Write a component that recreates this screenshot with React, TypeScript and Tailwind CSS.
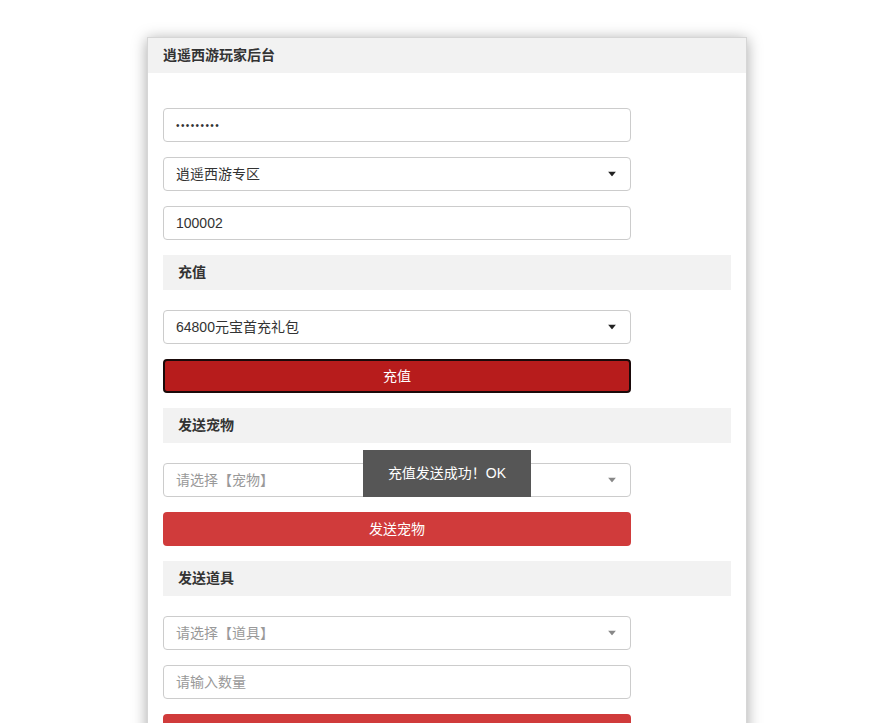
import React from "react";

const font = { fontFamily: '"Liberation Sans", "Noto Sans CJK SC", sans-serif' };

function Arrow({ gray }: { gray?: boolean }) {
  return (
    <svg width="8" height="5" viewBox="0 0 8 5" className="absolute right-[14px] top-1/2 -translate-y-1/2">
      <path d="M0 0 L8 0 L4 5 Z" fill={gray ? "#888" : "#222"} />
    </svg>
  );
}

function Field({ text, placeholder, select, grayArrow, dots }: { text: string; placeholder?: boolean; select?: boolean; grayArrow?: boolean; dots?: boolean }) {
  return (
    <div className="relative w-[468px] h-[34px] border border-[#cccccc] rounded-[4px] bg-white flex items-center pl-[12px]">
      <span className={`${dots ? "text-[10px] tracking-[1.4px]" : "text-[14px]"} ${placeholder ? "text-[#999]" : "text-[#333]"}`}>{text}</span>
      {select && <Arrow gray={grayArrow} />}
    </div>
  );
}

function Section({ title }: { title: string }) {
  return (
    <div className="w-full h-[35px] bg-[#f2f2f2] flex items-center pl-[15px] mb-[20px]">
      <span className="text-[14px] font-bold text-[#333]">{title}</span>
    </div>
  );
}

export default function App() {
  return (
    <div className="w-[886px] h-[723px] bg-white overflow-hidden relative" style={font}>
      <div className="ml-[147px] mt-[37px] w-[600px] bg-white border border-[#d6d6d6] shadow-[0_2px_14px_rgba(0,0,0,0.35)] pb-[40px]">
        <div className="h-[35px] bg-[#f2f2f2] flex items-center pl-[15px]">
          <span className="text-[14px] font-bold text-[#333]">逍遥西游玩家后台</span>
        </div>
        <div className="px-[15px] pt-[35px] flex flex-col">
          <div className="flex flex-col gap-[15px] mb-[15px]">
            <Field text="•••••••••" dots />
            <Field text="逍遥西游专区" select />
            <Field text="100002" />
          </div>
          <Section title="充值" />
          <div className="flex flex-col gap-[15px] mb-[15px]">
            <Field text="64800元宝首充礼包" select />
            <div className="w-[468px] h-[34px] rounded-[4px] bg-[#b71c1c] border-2 border-[#1a0a0a] flex items-center justify-center">
              <span className="text-[14px] text-white">充值</span>
            </div>
          </div>
          <Section title="发送宠物" />
          <div className="flex flex-col gap-[15px] mb-[15px]">
            <Field text="请选择【宠物】" placeholder select grayArrow />
            <div className="w-[468px] h-[34px] rounded-[4px] bg-[#d03b3b] flex items-center justify-center">
              <span className="text-[14px] text-white">发送宠物</span>
            </div>
          </div>
          <Section title="发送道具" />
          <div className="flex flex-col gap-[15px]">
            <Field text="请选择【道具】" placeholder select grayArrow />
            <Field text="请输入数量" placeholder />
            <div className="w-[468px] h-[34px] rounded-[4px] bg-[#d03b3b] flex items-center justify-center">
              <span className="text-[14px] text-white">发送道具</span>
            </div>
          </div>
        </div>
      </div>
      <div className="absolute left-[363px] top-[450px] w-[168px] h-[47px] bg-[#565656] flex items-center justify-center">
        <span className="text-[14px] text-white">充值发送成功！OK</span>
      </div>
    </div>
  );
}
